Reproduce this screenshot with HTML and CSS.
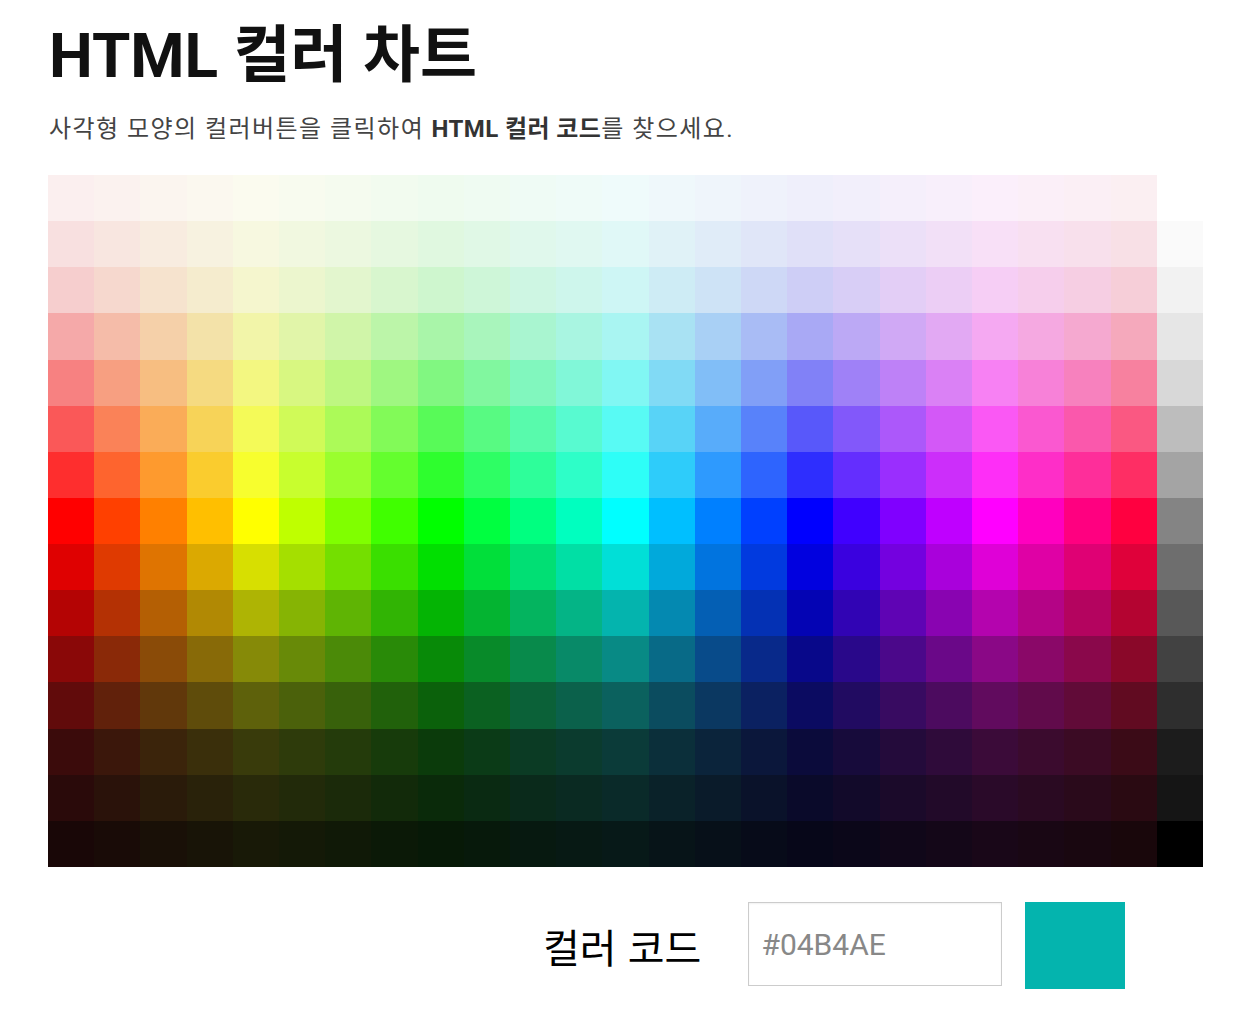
FILE: index.html
```html
<!DOCTYPE html>
<html lang="ko">
<head>
<meta charset="utf-8">
<title>HTML 컬러 차트</title>
<link rel="stylesheet" href="styles.css">
</head>
<body>
<div class="page">
  <h1 class="title">HTML 컬러 차트</h1>
  <p class="subtitle">사각형 모양의 컬러버튼을 클릭하여 <b>HTML 컬러 코드</b>를 찾으세요.</p>
  <div class="chart" id="chart"></div>
  <div class="picker">
    <span class="picker-label">컬러 코드</span>
    <input class="picker-input" type="text" value="#04B4AE" readonly>
    <div class="picker-swatch"></div>
  </div>
</div>
<script src="script.js"></script>
</body>
</html>
```

FILE: styles.css
```css
html, body {
  margin: 0;
  padding: 0;
  background: #ffffff;
}
.page {
  padding: 0 37px 0 48px;
  font-family: Roboto, "Noto Sans CJK KR", sans-serif;
}
.title {
  margin: 25px 0 0 1px;
  font-size: 62px;
  line-height: 1;
  font-weight: 700;
  color: #111111;
}
.subtitle {
  margin: 30px 0 0 1px;
  font-size: 24px;
  line-height: 1;
  letter-spacing: 1.45px;
  color: #444444;
}
.subtitle b {
  font-weight: 700;
  letter-spacing: 0.4px;
  color: #333333;
}
.chart {
  margin-top: 34px;
  display: grid;
  grid-template-columns: repeat(25, 1fr);
  grid-template-rows: repeat(15, 1fr);
  width: 1155px;
  height: 692px;
}
.cell {
  cursor: pointer;
}
.picker {
  margin-top: 35px;
  display: flex;
  align-items: flex-start;
  padding-left: 495px;
}
.picker-label {
  align-self: center;
  font-family: "Noto Sans CJK KR", sans-serif;
  font-size: 40px;
  color: #000000;
  margin-right: 47px;
}
.picker-input {
  box-sizing: border-box;
  width: 254px;
  height: 84px;
  border: 1px solid #cccccc;
  padding: 0 12px;
  font-family: Roboto, sans-serif;
  font-size: 30px;
  color: #888888;
  outline: none;
  box-shadow: inset 0 1px 2px rgba(0,0,0,0.06);
}
.picker-swatch {
  width: 100px;
  height: 87px;
  margin-left: 23px;
  background: #04B4AE;
}
```

FILE: script.js
```js
var rows = [
"FBEFEF FBF2EF FBF5EF FBF8EF FBFBEF F8FBEF F5FBEF F2FBEF EFFBEF EFFBF2 EFFBF5 EFFBF8 EFFBFB EFF8FB EFF5FB EFF2FB EFEFFB F2EFFB F5EFFB F8EFFB FBEFFB FBEFF8 FBEFF5 FBEFF2 FFFFFF",
"F8E0E0 F8E6E0 F8ECE0 F7F2E0 F7F8E0 F1F8E0 ECF8E0 E6F8E0 E0F8E0 E0F8E6 E0F8EC E0F8F1 E0F8F7 E0F2F7 E0ECF8 E0E6F8 E0E0F8 E6E0F8 ECE0F8 F2E0F7 F8E0F7 F8E0F1 F8E0EC F8E0E6 FAFAFA",
"F6CECE F6D8CE F6E3CE F5ECCE F5F6CE ECF6CE E3F6CE D8F6CE CEF6CE CEF6D8 CEF6E3 CEF6EC CEF6F5 CEECF5 CEE3F6 CED8F6 CECEF6 D8CEF6 E3CEF6 ECCEF5 F6CEF5 F6CEEC F6CEE3 F6CED8 F2F2F2",
"F5A9A9 F5BCA9 F5D0A9 F3E2A9 F2F5A9 E1F5A9 D0F5A9 BCF5A9 A9F5A9 A9F5BC A9F5D0 A9F5E1 A9F5F2 A9E2F3 A9D0F5 A9BCF5 A9A9F5 BCA9F5 D0A9F5 E2A9F3 F5A9F2 F5A9E1 F5A9D0 F5A9BC E6E6E6",
"F78181 F79F81 F7BE81 F5DA81 F3F781 D8F781 BEF781 9FF781 81F781 81F79F 81F7BE 81F7D8 81F7F3 81DAF5 81BEF7 819FF7 8181F7 9F81F7 BE81F7 DA81F5 F781F3 F781D8 F781BE F7819F D8D8D8",
"FA5858 FA8258 FAAC58 F7D358 F4FA58 D0FA58 ACFA58 82FA58 58FA58 58FA82 58FAAC 58FAD0 58FAF4 58D3F7 58ACFA 5882FA 5858FA 8258FA AC58FA D358F7 FA58F4 FA58D0 FA58AC FA5882 BDBDBD",
"FE2E2E FE642E FE9A2E FACC2E F7FE2E C8FE2E 9AFE2E 64FE2E 2EFE2E 2EFE64 2EFE9A 2EFEC8 2EFEF7 2ECCFA 2E9AFE 2E64FE 2E2EFE 642EFE 9A2EFE CC2EFA FE2EF7 FE2EC8 FE2E9A FE2E64 A4A4A4",
"FF0000 FF4000 FF8000 FFBF00 FFFF00 BFFF00 80FF00 40FF00 00FF00 00FF40 00FF80 00FFBF 00FFFF 00BFFF 0080FF 0040FF 0000FF 4000FF 8000FF BF00FF FF00FF FF00BF FF0080 FF0040 848484",
"DF0101 DF3A01 DF7401 DBA901 D7DF01 A5DF00 74DF00 3ADF00 01DF01 01DF3A 01DF74 01DFA5 01DFD7 01A9DB 0174DF 013ADF 0101DF 3A01DF 7401DF A901DB DF01D7 DF01A5 DF0174 DF013A 6E6E6E",
"B40404 B43104 B45F04 B18904 AEB404 86B404 5FB404 31B404 04B404 04B431 04B45F 04B486 04B4AE 0489B1 045FB4 0431B4 0404B4 3104B4 5F04B4 8904B1 B404AE B40486 B4045F B40431 585858",
"8A0808 8A2908 8A4B08 886A08 868A08 688A08 4B8A08 298A08 088A08 088A29 088A4B 088A68 088A85 086A87 084B8A 08298A 08088A 29088A 4B088A 6A0888 8A0886 8A0868 8A084B 8A0829 424242",
"610B0B 61210B 61380B 5F4C0B 5E610B 4B610B 38610B 21610B 0B610B 0B6121 0B6138 0B614B 0B615E 0B4C5F 0B3861 0B2161 0B0B61 210B61 380B61 4C0B5F 610B5E 610B4B 610B38 610B21 2E2E2E",
"3B0B0B 3B170B 3B240B 3A2F0B 393B0B 2E3B0B 243B0B 173B0B 0B3B0B 0B3B17 0B3B24 0B3B2E 0B3B39 0B2F3A 0B243B 0B173B 0B0B3B 170B3B 240B3B 2F0B3A 3B0B39 3B0B2E 3B0B24 3B0B17 1C1C1C",
"2A0A0A 2A120A 2A1B0A 29220A 292A0A 222A0A 1B2A0A 122A0A 0A2A0A 0A2A12 0A2A1B 0A2A22 0A2A29 0A2229 0A1B2A 0A122A 0A0A2A 120A2A 1B0A2A 220A29 2A0A29 2A0A22 2A0A1B 2A0A12 151515",
"190707 190B07 191007 181407 181907 141907 101907 0B1907 071907 07190B 071910 071914 071918 071418 071019 070B19 070719 0B0719 100719 140718 190718 190714 190710 19070B 000000"
];
var chart = document.getElementById('chart');
var input = document.querySelector('.picker-input');
var swatch = document.querySelector('.picker-swatch');
rows.forEach(function (row) {
  row.split(' ').forEach(function (hex) {
    var cell = document.createElement('div');
    cell.className = 'cell';
    cell.style.background = '#' + hex;
    cell.title = '#' + hex;
    cell.addEventListener('click', function () {
      input.value = '#' + hex;
      swatch.style.background = '#' + hex;
    });
    chart.appendChild(cell);
  });
});
```
